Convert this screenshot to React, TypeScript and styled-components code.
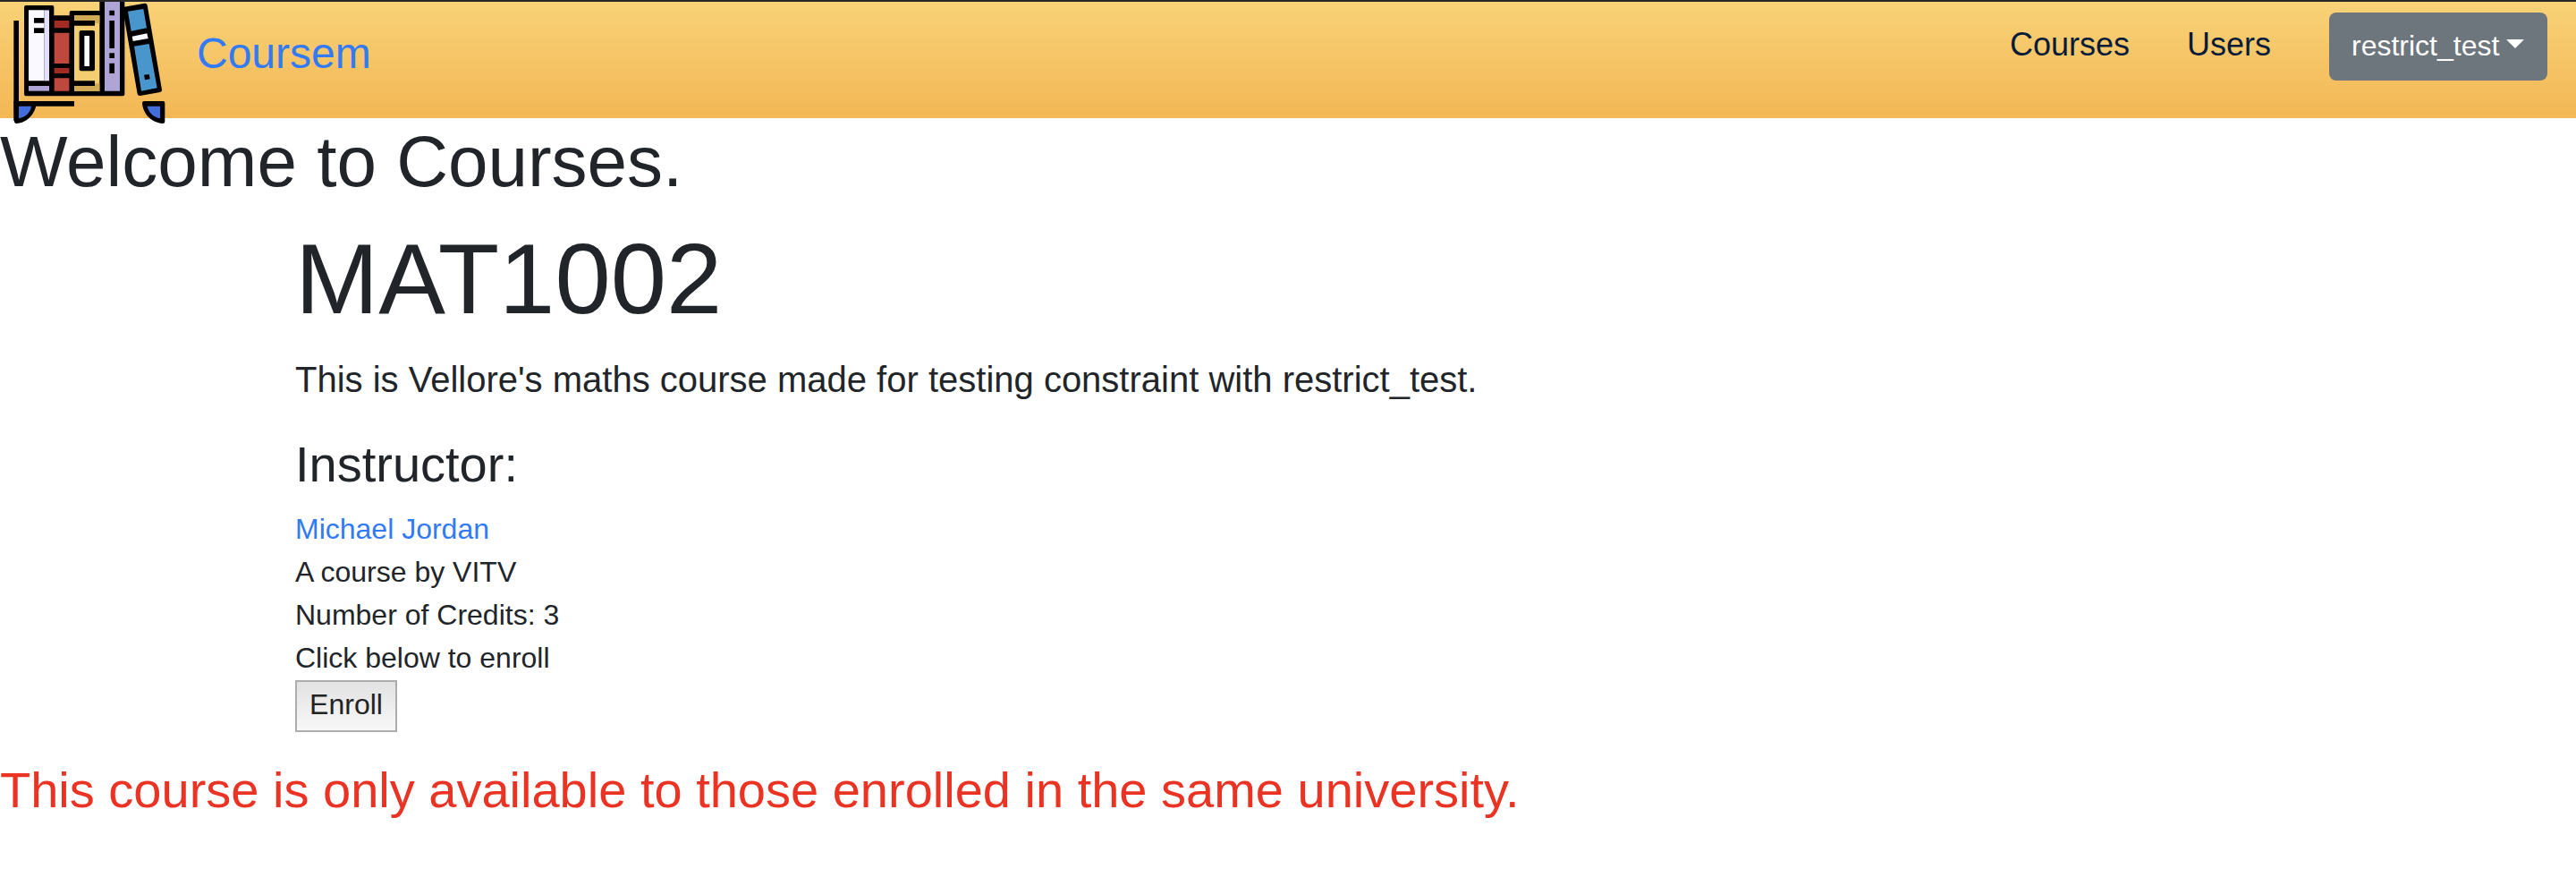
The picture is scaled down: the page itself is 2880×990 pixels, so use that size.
import React from 'react';
import styled, { createGlobalStyle } from 'styled-components';

const GlobalStyle = createGlobalStyle`
  *, *::before, *::after { box-sizing: border-box; }
  body {
    margin: 0;
    background: #fff;
    color: #212529;
    font-family: "Liberation Sans", Arial, sans-serif;
    font-size: 32px;
    line-height: 1.5;
  }
`;

const Page = styled.div`
  min-height: 990px;
  border-top: 2px solid #282828;
`;

const Navbar = styled.nav`
  display: flex;
  align-items: flex-start;
  justify-content: space-between;
  height: 130px;
  padding: 0 32px 0 0;
  background: linear-gradient(#f8d277, #f3b755);
`;

const Brand = styled.a`
  display: flex;
  color: #327af6;
  font-size: 48px;
  line-height: 72px;
  text-decoration: none;
`;

const BrandName = styled.span`
  padding-top: 22px;
  margin-left: 20px;
`;

const Logo = styled.svg`
  display: block;
  flex: none;
  width: 200px;
  height: 148px;
`;

const NavLinks = styled.div`
  display: flex;
  align-items: flex-start;
  padding-top: 12px;
`;

const NavLink = styled.a<{ $gap: number }>`
  margin: 9px ${({ $gap }) => $gap}px 0 0;
  color: #071c39;
  font-size: 36px;
  line-height: 54px;
  text-decoration: none;
`;

const UserButton = styled.button`
  display: flex;
  align-items: center;
  justify-content: space-between;
  width: 244px;
  height: 76px;
  padding: 0 26px 2px 25px;
  border: 0;
  border-radius: 8px;
  background: #6d757d;
  color: #fff;
  font: inherit;
`;

const Caret = styled.span`
  margin-top: -4px;
  border-top: 10px solid currentColor;
  border-left: 10px solid transparent;
  border-right: 10px solid transparent;
`;

const Welcome = styled.h1`
  margin: 0 0 14px;
  font-size: 80px;
  font-weight: 400;
  line-height: 98px;
`;

const Container = styled.main`
  width: 2280px;
  margin: 0 auto;
  padding: 0 30px;
`;

const CourseCode = styled.h1`
  margin: 0 0 14px;
  font-size: 112px;
  font-weight: 400;
  line-height: 136px;
`;

const Lead = styled.p`
  margin: 0 0 31px;
  font-size: 40px;
  line-height: 60px;
`;

const Subheading = styled.h3`
  margin: 0 0 15px;
  font-size: 56px;
  font-weight: 400;
  line-height: 67px;
`;

const Detail = styled.div`
  line-height: 48px;
`;

const InstructorLink = styled.a`
  color: #327af6;
  text-decoration: none;
`;

const EnrollButton = styled.button`
  display: block;
  width: 114px;
  height: 58px;
  margin-top: 1px;
  padding: 0 0 4px;
  border: 2px solid #adadad;
  border-radius: 0;
  background: linear-gradient(#e2e2e2, #f8f8f8);
  color: #222;
  font: inherit;
  line-height: 48px;
`;

const Warning = styled.h3`
  margin: 31px 0 16px;
  color: #ea3323;
  font-size: 56px;
  font-weight: 400;
  line-height: 67px;
`;

const BooksLogo = () => (
  <Logo viewBox="0 6 600 444" aria-hidden="true">
    {/* shelf bracket */}
    <path d="M46 69H63V339H249V356H63V405H46Z" />
    <path d="M46 339H123C121 381 91 412 55 414Q48 414 48 406Z" />
    <path d="M63 356H105C102 377 88 391 63 397Z" fill="#416ddd" />
    <path d="M477 345Q477 339 484 339H547Q553 339 553 345V408Q553 414 546 414C508 411 479 382 477 345Z" />
    <path d="M494 356H537V397C514 392 498 377 494 356Z" fill="#416ddd" />
    {/* upright books */}
    <path d="M87 18H175Q181 18 181 24V52H233V42Q233 36 239 36H334V0H418V316Q418 322 412 322H87Q81 322 81 316V24Q81 18 87 18Z" />
    <path d="M96 34H148V271H96Z" fill="#f9f9ff" />
    <path d="M148 34H165V271H148Z" fill="#e2e1fc" />
    <path d="M96 288H165V305H96Z" fill="#aea5d6" />
    <path d="M114 60H148V77H114ZM114 94H148V111H114Z" />
    <path d="M182 69H232V94H182ZM182 228H232V246H182Z" fill="#a12c24" />
    <path d="M182 110H232V213H182ZM182 262H232V305H182Z" fill="#be473e" />
    <path d="M249 52H334V305H249Z" fill="#f3ce70" />
    <path d="M249 52H334V78H249ZM249 280H334V305H249Z" fill="#d0aa55" />
    <path d="M249 69H318V86H249ZM249 271H318V288H249Z" />
    <rect x="266" y="102" width="52" height="136" rx="6" />
    <path d="M283 120H300V222H283Z" fill="#fff" />
    <path d="M351 6H402V305H351Z" fill="#aea5d6" />
    <path d="M367 35H384V52H367ZM367 69H384V162H367ZM367 178H384V195H367ZM367 212H384V246H367Z" />
    {/* leaning book */}
    <path d="M412 24L485 11Q492 10 494 17L543 301Q544 307 537 309L470 321Q463 322 461 315L412 32Z" />
    <path d="M429 38L481 30L492 94L440 104ZM450 155L500 147L527 295L474 305Z" fill="#4996cd" />
    <path d="M443 122L493 112L497 129L446 138Z" fill="#f8f8ff" />
    <path d="M483 251L500 249L503 265L486 268Z" />
  </Logo>
);

export default function App() {
  return (
    <Page>
      <GlobalStyle />
      <Navbar>
        <Brand>
          <BooksLogo />
          <BrandName>Coursem</BrandName>
        </Brand>
        <NavLinks>
          <NavLink $gap={64}>Courses</NavLink>
          <NavLink $gap={65}>Users</NavLink>
          <UserButton>
            restrict_test
            <Caret />
          </UserButton>
        </NavLinks>
      </Navbar>
      <Welcome>Welcome to Courses.</Welcome>
      <Container>
        <CourseCode>MAT1002</CourseCode>
        <Lead>This is Vellore's maths course made for testing constraint with restrict_test.</Lead>
        <Subheading>Instructor:</Subheading>
        <Detail>
          <InstructorLink>Michael Jordan</InstructorLink>
        </Detail>
        <Detail>A course by VITV</Detail>
        <Detail>Number of Credits: 3</Detail>
        <Detail>Click below to enroll</Detail>
        <EnrollButton>Enroll</EnrollButton>
      </Container>
      <Warning>This course is only available to those enrolled in the same university.</Warning>
    </Page>
  );
}
